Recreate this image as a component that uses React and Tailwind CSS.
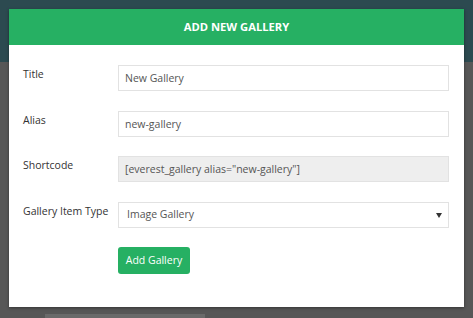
import React from "react";

const font = { fontFamily: '"Open Sans", "Noto Sans", sans-serif' };

function Row({ label, children }) {
  return (
    <div className="flex items-start">
      <label className="w-[95px] shrink-0 pt-[1px] text-[10.5px] leading-[16px] text-[#333]">
        {label}
      </label>
      <div className="flex-1">{children}</div>
    </div>
  );
}

export default function App() {
  return (
    <div
      className="relative h-[318px] w-[473px] overflow-hidden bg-[#575757]"
      style={font}
    >
      {/* page behind the overlay */}
      <div className="h-[62px] bg-[#2c4a50]" />
      <div className="absolute left-[45px] top-[314px] h-[4px] w-[160px] bg-[#6a6a6a]" />

      {/* modal */}
      <div className="absolute left-[9px] top-[9px] w-[455px] bg-white shadow-[0_1px_3px_rgba(0,0,0,0.4)]">
        <div className="flex h-[36px] items-center justify-center bg-[#26b063]">
          <h2 className="text-[11.2px] font-bold text-white">ADD NEW GALLERY</h2>
        </div>

        <div className="flex flex-col gap-[19.5px] pl-[14px] pr-[15px] pt-[20px] pb-[33px]">
          <Row label="Title">
            <input
              readOnly
              value="New Gallery"
              className="block h-[26px] w-full border border-[#e2e2e2] bg-white px-[6px] text-[10.5px] text-[#555] outline-none"
            />
          </Row>
          <Row label="Alias">
            <input
              readOnly
              value="new-gallery"
              className="block h-[26px] w-full border border-[#e2e2e2] bg-white px-[6px] text-[10.5px] text-[#555] outline-none"
            />
          </Row>
          <Row label="Shortcode">
            <input
              readOnly
              value={'[everest_gallery alias="new-gallery"]'}
              className="block h-[26px] w-full border border-[#e2e2e2] bg-[#eeeeee] px-[6px] text-[10.5px] text-[#555] outline-none"
            />
          </Row>
          <Row label="Gallery Item Type">
            <div className="relative flex h-[26px] w-full items-center border border-[#e2e2e2] bg-white pl-[8px] text-[10.5px] text-[#555]">
              Image Gallery
              <span className="absolute right-[6px] top-[10px] h-0 w-0 border-x-[3px] border-t-[5px] border-x-transparent border-t-[#333]" />
            </div>
          </Row>
          <div className="pl-[95px]">
            <button className="block h-[27px] w-[72px] rounded-[3px] bg-[#26b063] text-[10.5px] text-white">
              Add Gallery
            </button>
          </div>
        </div>
      </div>
    </div>
  );
}
